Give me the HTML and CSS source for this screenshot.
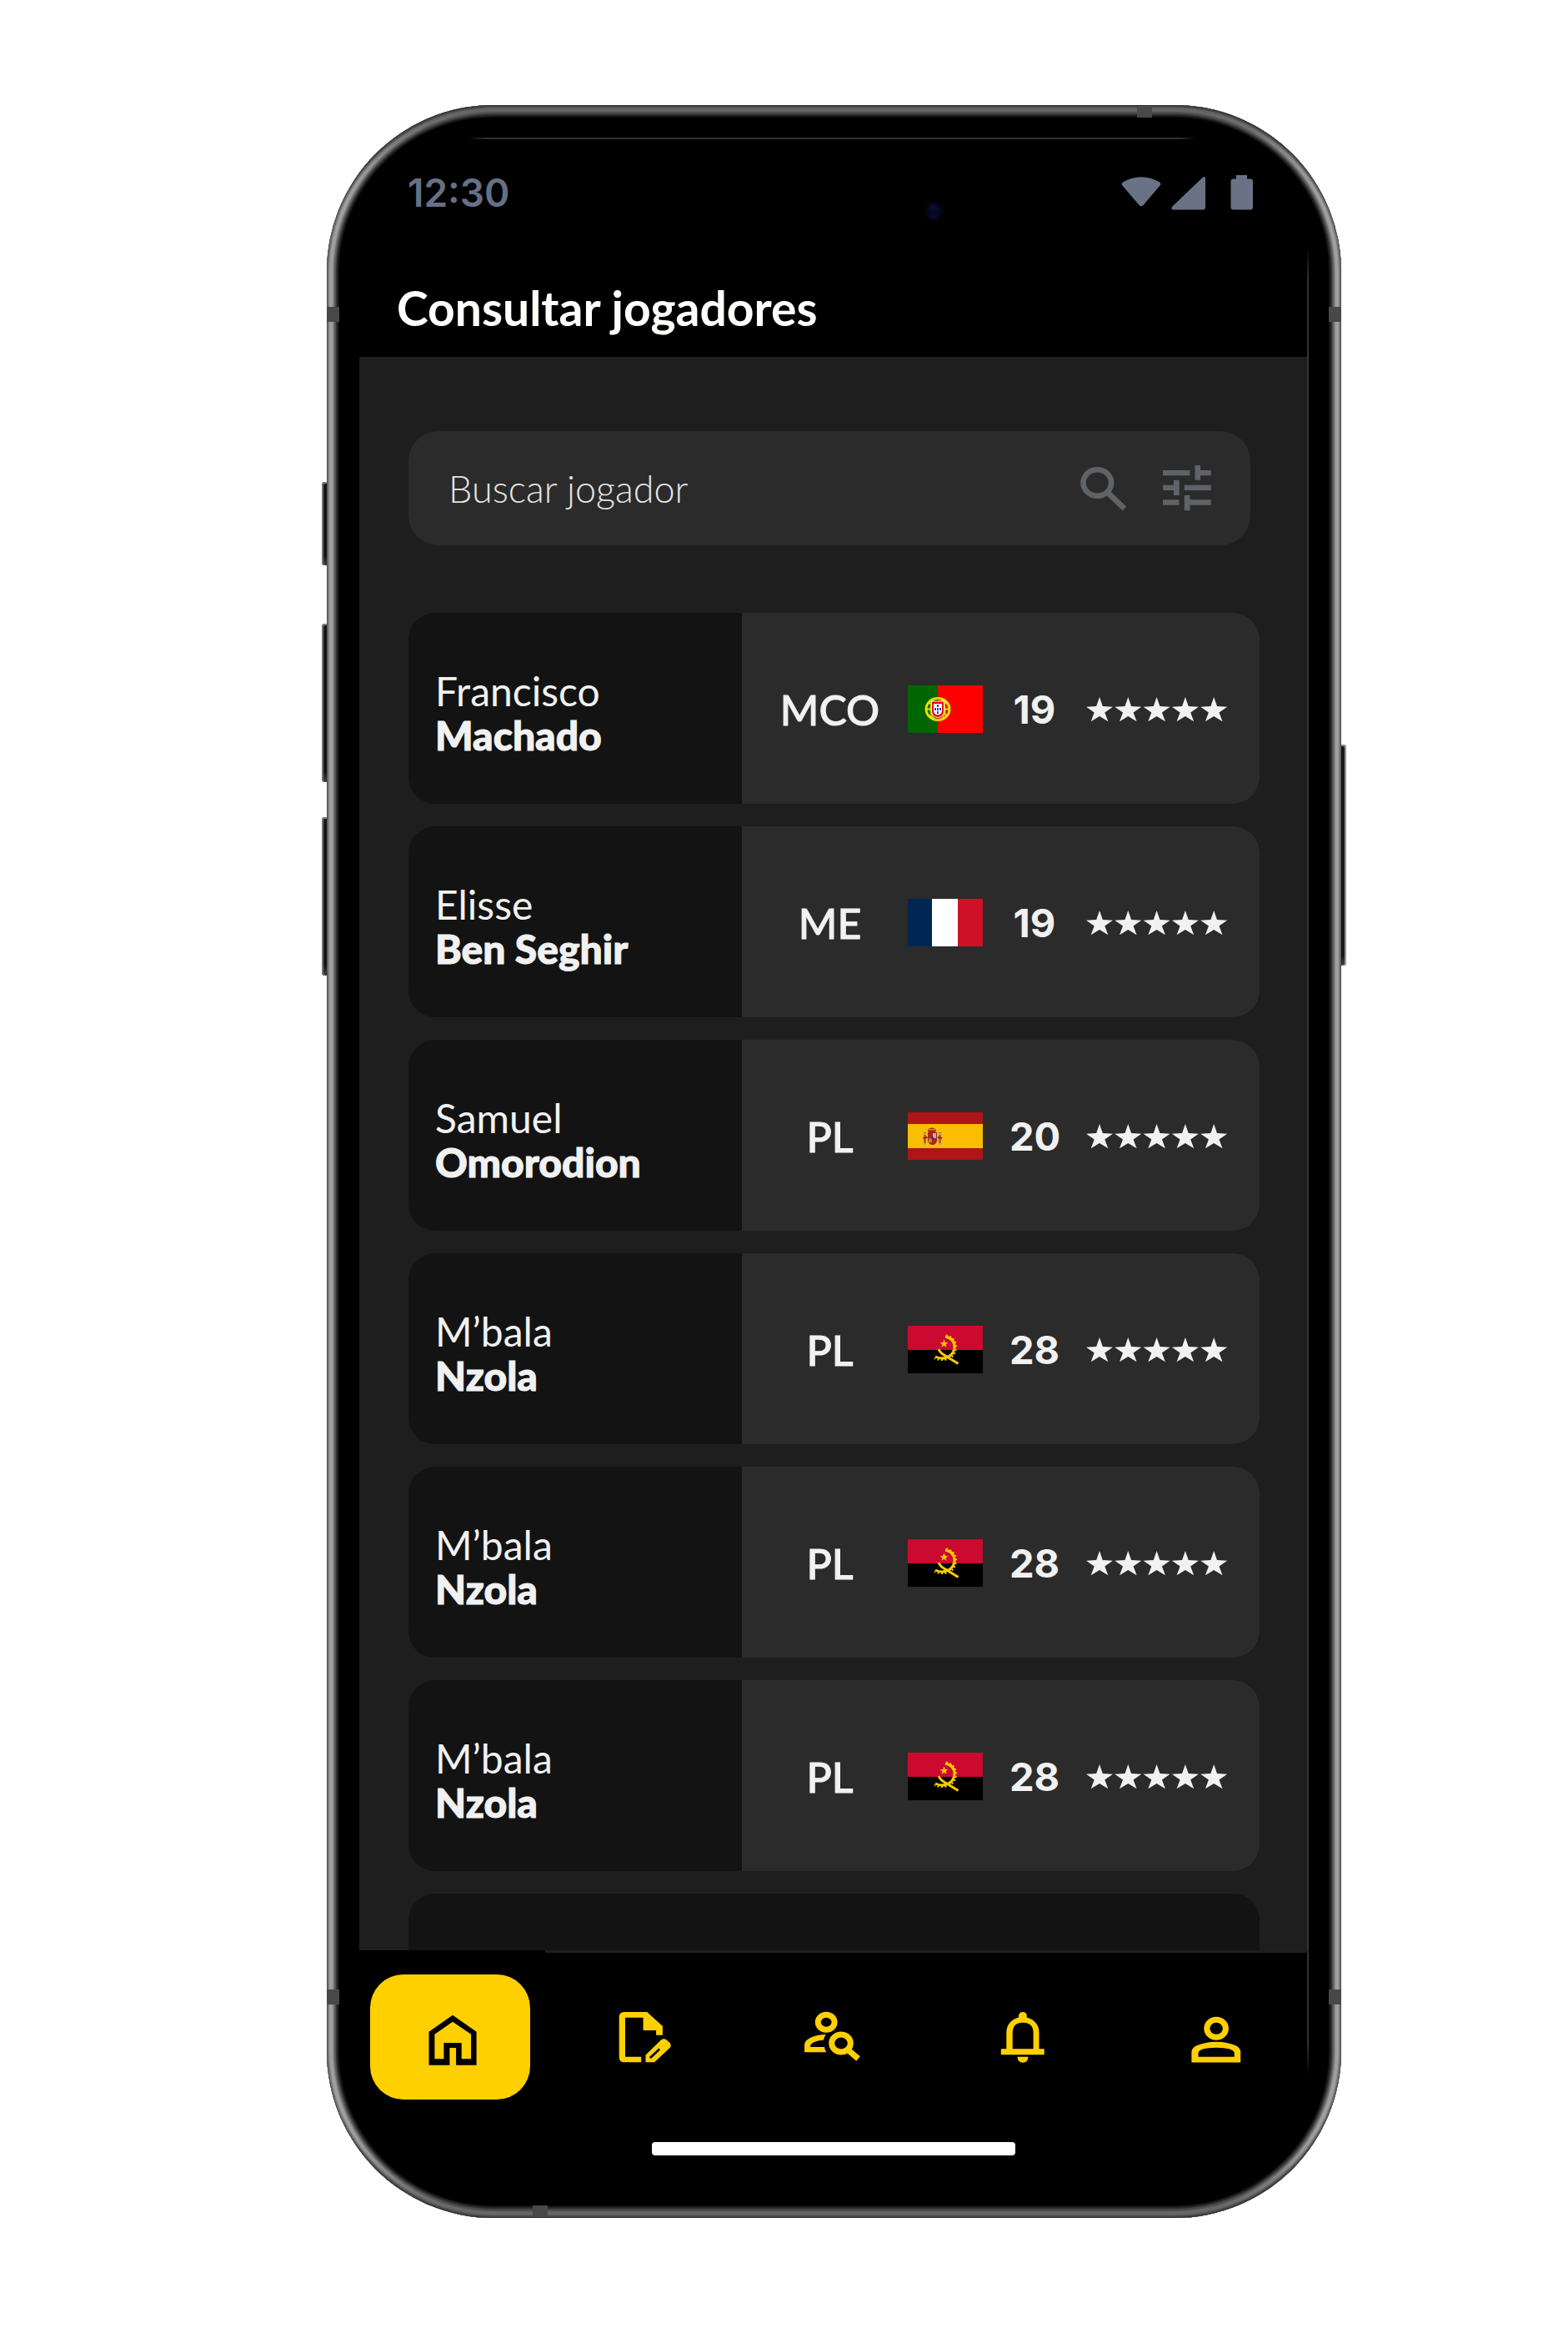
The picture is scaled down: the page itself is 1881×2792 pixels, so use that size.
FILE: index.html
```
<!DOCTYPE html>
<html lang="pt">
<head>
<meta charset="utf-8">
<meta name="viewport" content="width=device-width, initial-scale=1">
<title>Consultar jogadores</title>
<link rel="stylesheet" href="styles.css">
</head>
<body>
<svg class="sprite" aria-hidden="true">
  <symbol id="stars" viewBox="0 0 170 30">
    <g id="star-row">
      <path id="star" d="M16 0 19.8 11 32 11.7 22.3 18.5 26.3 29.3 16 23 5.7 29.3 9.7 18.5 0 11.7 12.2 11Z"/>
      <use href="#star" x="34.3"/><use href="#star" x="68.6"/><use href="#star" x="102.9"/><use href="#star" x="137.2"/>
    </g>
  </symbol>
  <symbol id="flag-pt" viewBox="0 0 90 57">
    <path fill="#f00" d="M0 0h90v57H0z"/><path fill="#060" d="M0 0h36v57H0z"/>
    <ellipse cx="36" cy="28.5" rx="14" ry="13" fill="none" stroke="#e8e000" stroke-width="3"/>
    <ellipse cx="36" cy="28.5" rx="9" ry="13" fill="none" stroke="#d8d000" stroke-width="1.5"/>
    <path fill="none" stroke="#e8e000" stroke-width="2" d="M22 28.500H50M25 20Q36 29 47 36M24 35 32 40M40 17l8 6"/>
    <path fill="#e00" stroke="#fff" stroke-width="1" d="M28.500 19H43.500V30Q43.500 38 36 38.500 28.500 38 28.500 30Z"/>
    <path fill="#fff" d="M31 22H41V30Q41 35 36 35.500 31 35 31 30Z"/>
    <path fill="#2a4fa8" d="M35 23h2v3h-2zM35 27h2v3h-2zM35 31h2v3h-2zM32 27h2v3h-2zM38 27h2v3h-2z"/>
  </symbol>
  <symbol id="flag-fr" viewBox="0 0 90 57">
    <path fill="#fff" d="M0 0h90v57H0z"/><path fill="#002654" d="M0 0h29v57H0z"/><path fill="#ce1126" d="M60 0h30v57H60z"/>
  </symbol>
  <symbol id="flag-es" viewBox="0 0 90 57">
    <path fill="#ad1519" d="M0 0h90v57H0z"/><path fill="#fabd00" d="M0 14h90v29H0z"/>
    <path fill="#a8261c" d="M24 22Q24 19 29 18.500 34 19 34 22L33 24H35V34Q34 39 29.500 39 25 39 24 34V24H25Z"/>
    <path fill="#d9a0b0" d="M30 25h4v6h-4z"/><path fill="#c78a1e" d="M25 31h4v5h-4zM25 20h8v1.500h-8z"/>
    <circle cx="29.500" cy="31" r="1.800" fill="#27408b"/>
    <path fill="none" stroke="#9b5548" stroke-width="2.400" d="M20.500 24v15M38.500 24v15"/>
    <path stroke="#c9b6a0" stroke-width="1.500" d="M18.500 26h4M18.500 38h4M36.500 26h4M36.500 38h4"/>
    <path stroke="#ad1519" stroke-width="2" d="M18.500 31l5-1M36 30l5 1"/>
  </symbol>
  <symbol id="flag-ao" viewBox="0 0 90 57">
    <path fill="#cc092f" d="M0 0h90v29H0z"/><path fill="#000" d="M0 29h90v28H0z"/>
    <path fill="none" stroke="#ffcb00" stroke-width="3" d="M45 13Q56 15 56 26 55 36 45 38.500 39 40 33 37"/>
    <path fill="none" stroke="#ffcb00" stroke-width="2" stroke-dasharray="2 2.500" d="M46 11.500Q58 14 58 26 57 38 46 40.500 39 42 32 39"/>
    <path fill="none" stroke="#ffcb00" stroke-width="3" d="M37 28Q39 33 46 36.500L60.500 45.500"/>
    <path fill="#ffcb00" d="M43.500 16.500 44.800 20 48.500 20.200 45.600 22.300 46.600 25.700 43.500 23.700 40.400 25.700 41.400 22.300 38.500 20.200 42.200 20Z"/>
  </symbol>
</svg>

<main class="phone">
  <span class="key key-action"></span>
  <span class="key key-up"></span>
  <span class="key key-down"></span>
  <span class="key key-power"></span>
  <div class="frame">
    <span class="seam seam-left-top"></span>
    <span class="seam seam-right-top"></span>
    <span class="seam seam-left-bottom"></span>
    <span class="seam seam-right-bottom"></span>
    <span class="seam seam-top"></span>
    <span class="seam seam-bottom"></span>
    <span class="glare-top"></span>
    <span class="glare-side"></span>
    <span class="camera"></span>

    <header class="header">
      <div class="status">
        <time class="clock">12:30</time>
        <svg class="status-icons" viewBox="0 0 158 42" aria-hidden="true">
          <path d="M1 12Q0 10 2 8.500Q24 -4 46 8.500Q48 10 47 12L26.500 36Q24 38.500 21.500 36Z"/>
          <path d="M98 2.500Q101 1 101 4V38Q101 41.500 98 41.500H63Q59 41.500 61 38Z"/>
          <path d="M138 0H151V4.500H155Q158 4.500 158 7.500V38Q158 41.500 155 41.500H134.500Q131.500 41.500 131.500 38V7.500Q131.500 4.500 134.500 4.500H138Z"/>
        </svg>
      </div>
      <h1 class="title">Consultar jogadores</h1>
    </header>

    <section class="content">
      <form class="search" role="search">
        <input class="search-input" type="text" placeholder="Buscar jogador" aria-label="Buscar jogador">
        <button class="icon-button" type="submit" aria-label="Buscar">
          <svg class="search-icon" viewBox="0 0 60 60"><ellipse cx="23.300" cy="23" rx="16.800" ry="15.800"/><path d="M35 34 56 54"/></svg>
        </button>
        <button class="icon-button" type="button" aria-label="Filtros">
          <svg class="filter-icon" viewBox="0 0 60 60"><path d="M0 8H32.400V14.300H0ZM38.500 2H45V8H57.700V14.300H45V19.700H38.500ZM0 25.700H13V19.700H19.700V38H13V32H0ZM25.800 25.700H57.700V32H25.800ZM0 43.300H19.400V49.700H0ZM25.800 38H32.400V43.300H57.700V49.700H32.400V56.300H25.800Z"/></svg>
        </button>
      </form>

      <ul class="players">
        <li class="player">
          <div class="name">Francisco<strong class="surname">Machado</strong></div>
          <div class="stats"><span class="position">MCO</span><svg class="flag" role="img" aria-label="Portugal"><use href="#flag-pt"/></svg><span class="age">19</span><svg class="stars" role="img" aria-label="5 estrelas"><use href="#stars"/></svg></div>
        </li>
        <li class="player">
          <div class="name">Elisse<strong class="surname">Ben Seghir</strong></div>
          <div class="stats"><span class="position">ME</span><svg class="flag" role="img" aria-label="França"><use href="#flag-fr"/></svg><span class="age">19</span><svg class="stars" role="img" aria-label="5 estrelas"><use href="#stars"/></svg></div>
        </li>
        <li class="player">
          <div class="name">Samuel<strong class="surname">Omorodion</strong></div>
          <div class="stats"><span class="position">PL</span><svg class="flag" role="img" aria-label="Espanha"><use href="#flag-es"/></svg><span class="age">20</span><svg class="stars" role="img" aria-label="5 estrelas"><use href="#stars"/></svg></div>
        </li>
        <li class="player">
          <div class="name">M’bala<strong class="surname">Nzola</strong></div>
          <div class="stats"><span class="position">PL</span><svg class="flag" role="img" aria-label="Angola"><use href="#flag-ao"/></svg><span class="age">28</span><svg class="stars" role="img" aria-label="5 estrelas"><use href="#stars"/></svg></div>
        </li>
        <li class="player">
          <div class="name">M’bala<strong class="surname">Nzola</strong></div>
          <div class="stats"><span class="position">PL</span><svg class="flag" role="img" aria-label="Angola"><use href="#flag-ao"/></svg><span class="age">28</span><svg class="stars" role="img" aria-label="5 estrelas"><use href="#stars"/></svg></div>
        </li>
        <li class="player">
          <div class="name">M’bala<strong class="surname">Nzola</strong></div>
          <div class="stats"><span class="position">PL</span><svg class="flag" role="img" aria-label="Angola"><use href="#flag-ao"/></svg><span class="age">28</span><svg class="stars" role="img" aria-label="5 estrelas"><use href="#stars"/></svg></div>
        </li>
        <li class="player player-peek"></li>
      </ul>
    </section>

    <nav class="tabs">
      <a class="tab tab-active" href="#inicio" aria-label="Início">
        <svg class="tab-icon" viewBox="0 0 72 72"><path fill-rule="evenodd" d="M10.500 69.700V29.700L39 9.700 67.600 29.700V69.700H43.100V49H35.400V69.700ZM17.400 62.300H28.400V43H49.700V62.300H61.100V32.700L39 17.700 17.400 32.700Z"/></svg>
      </a>
      <a class="tab" href="#relatorios" aria-label="Relatórios">
        <svg class="tab-icon" viewBox="0 0 72 72"><path d="M13 6H40.100L58.900 23V33.700H51.100V28H35.600V12.700H14V59.700H33.200V66.300H13Q6.700 66.300 6.700 60V12Q6.700 6 13 6Z"/><path fill-rule="evenodd" d="M38.500 66.300V57.500L57 39.500Q60.500 37 63.500 39.500L67.500 43Q70 46.300 67.500 49L49 66.300ZM43.400 61.500H45.500L56 51.500 54.400 49.500 43.400 59.500Z"/></svg>
      </a>
      <a class="tab" href="#jogadores" aria-label="Jogadores">
        <svg class="tab-icon" viewBox="0 0 72 72"><ellipse class="line" cx="27.200" cy="18.300" rx="9.900" ry="9"/><path fill-rule="evenodd" d="M1.100 54.300V45Q1.500 40 8 37 16 33 26.600 33Q24.500 36 24 39.500 16 40 11 43 8 44.500 8 48H25Q25.300 51.500 27.200 54.300Z"/><ellipse class="line" cx="45" cy="43.500" rx="11.300" ry="10.500"/><path class="line" d="M52 50.500 65.500 62"/></svg>
      </a>
      <a class="tab" href="#alertas" aria-label="Notificações">
        <svg class="tab-icon" viewBox="0 0 72 72"><path fill-rule="evenodd" d="M8.800 50.300H15.300V31Q15.300 17 30 12.500V10.500Q30.500 6 35 6 39.500 6 39.800 10.500V12.500Q54.500 17 54.500 31V50.300H60.700V57.300H8.800ZM22.700 50.300H47.600V31Q47.600 18.700 35 18.700 22.700 18.700 22.700 31Z"/><path d="M28.400 59.700H41.500Q41 66.700 35 66.700 29 66.700 28.400 59.700Z"/></svg>
      </a>
      <a class="tab" href="#perfil" aria-label="Perfil">
        <svg class="tab-icon" viewBox="0 0 72 72"><ellipse class="line" cx="40.100" cy="25.800" rx="11.300" ry="10.500"/><path fill-rule="evenodd" d="M10.400 66.500V54Q10.400 49.500 16 46.500 27 41.700 40 41.700 53 41.700 64 46.500 69.200 49.500 69.200 54V66.500ZM18.500 59.700H61.800V55Q60 48.700 40 48.700 20 48.700 18.500 55Z"/></svg>
      </a>
    </nav>
    <div class="home-bar"></div>
  </div>
</main>
</body>
</html>
```
FILE: styles.css
```
* {
  box-sizing: border-box;
}

body {
  margin: 0;
  padding: 126px 32px 131px 152px;
  background: #fff;
  color: #f1f1f1;
  font-family: Lato, "Liberation Sans", sans-serif;
}

.sprite {
  position: absolute;
  width: 0;
  height: 0;
}

/* Device body */
.phone {
  position: relative;
  max-width: 1217px;
  margin: 0 auto;
}

.frame {
  position: relative;
  padding: 0 40px 75px 39px;
  border-radius: 200px;
  background: #000;
  box-shadow:
    inset 0 22px 6px -12px rgba(0, 0, 0, 0.4),
    inset 0 -22px 6px -12px rgba(0, 0, 0, 0.4),
    inset 0 0 1px 1px #4c4c4c,
    inset 0 0 1px 3px #7a7a7a,
    inset 0 0 2px 8px #a0a0a0,
    inset 0 0 2px 11px #606060,
    inset 0 0 2px 14px #262626;
}

.key {
  position: absolute;
  left: -6px;
  width: 12px;
  border-radius: 4px;
  background: #161616;
  box-shadow: inset 2px 0 1px #777, inset 0 2px 1px #888, inset 0 -8px 4px #333;
}

.key-action {
  top: 452px;
  height: 100px;
}

.key-up {
  top: 622px;
  height: 190px;
}

.key-down {
  top: 854px;
  height: 190px;
}

.key-power {
  top: 767px;
  right: -6px;
  left: auto;
  height: 265px;
  box-shadow: inset -2px 0 1px #999, inset 0 2px 1px #888, inset 0 -8px 4px #333;
}

.seam {
  position: absolute;
  width: 15px;
  height: 18px;
  background: #484848;
}

.seam-left-top {
  top: 242px;
  left: 0;
}

.seam-right-top {
  top: 242px;
  right: 0;
}

.seam-left-bottom {
  bottom: 256px;
  left: 0;
}

.seam-right-bottom {
  right: 0;
  bottom: 256px;
}

.seam-top {
  top: 1px;
  right: 227px;
  width: 18px;
  height: 14px;
}

.seam-bottom {
  bottom: 1px;
  left: 247px;
  width: 18px;
  height: 14px;
}

.glare-top {
  position: absolute;
  top: 39px;
  right: 174px;
  left: 170px;
  height: 2px;
  background: linear-gradient(90deg, transparent, #303030 20px, #303030 calc(100% - 20px), transparent);
}

.glare-side {
  position: absolute;
  top: 170px;
  right: 39px;
  bottom: 170px;
  width: 2px;
  background: linear-gradient(transparent, #333 40px, #333 calc(100% - 40px), transparent);
}

.camera {
  position: absolute;
  top: 119px;
  right: 480px;
  width: 18px;
  height: 18px;
  border-radius: 50%;
  background: linear-gradient(#10124a, #05061c 50%, #0b1038);
  filter: blur(2px);
}

/* Header */
.header {
  padding: 78px 0 27px;
}

.status {
  display: flex;
  align-items: center;
  justify-content: space-between;
  padding: 0 66px 0 58px;
}

.clock {
  color: #667085;
  font: 600 46px/54px Inter, "Liberation Sans", sans-serif;
}

.status-icons {
  width: 158px;
  height: 42px;
  fill: #6a7285;
}

.title {
  margin: 79px 0 0;
  padding: 0 45px;
  color: #fffffb;
  font-size: 57px;
  font-weight: 700;
  line-height: 64px;
}

/* Player list */
.content {
  padding: 89px 58px 0 59px;
  background: #1e1e1e;
}

.search {
  display: flex;
  align-items: center;
  gap: 42px;
  height: 137px;
  margin-right: 11px;
  padding: 0 45px 0 48px;
  border-radius: 36px;
  background: #2b2b2b;
}

.search-input {
  flex: 1;
  min-width: 0;
  padding: 0;
  border: 0;
  outline: 0;
  background: none;
  color: #e4e4e4;
  font: 300 45px/54px Lato, "Liberation Sans", sans-serif;
}

.search-input::placeholder {
  color: #e4e4e4;
  opacity: 1;
}

.icon-button {
  display: block;
  width: 60px;
  height: 60px;
  padding: 0;
  border: 0;
  background: none;
}

.search-icon,
.filter-icon {
  display: block;
  width: 60px;
  height: 60px;
  fill: #5f6368;
}

.search-icon {
  fill: none;
  stroke: #5f6368;
  stroke-width: 6.6;
}

.players {
  display: flex;
  flex-direction: column;
  gap: 27px;
  margin: 0;
  padding: 81px 0 0;
  list-style: none;
}

.player {
  display: grid;
  grid-template-columns: 400px 1fr;
  height: 229px;
  overflow: hidden;
  border-radius: 32px;
  background: #131313;
}

.player-peek {
  height: 68px;
  border-radius: 32px 32px 0 0;
}

.name {
  display: flex;
  flex-direction: column;
  justify-content: center;
  padding: 10px 0 0 32px;
  font-size: 48px;
  line-height: 53px;
}

.surname {
  font-weight: 900;
  -webkit-text-stroke: 1px currentColor;
}

.stats {
  display: grid;
  grid-template-columns: 1fr 90px 60px 170px;
  align-items: center;
  gap: 32px;
  padding: 2px 38px 0 44px;
  background: #2b2b2b;
}

.position {
  font-size: 50px;
  font-weight: 500;
  line-height: 58px;
  text-align: center;
  -webkit-text-stroke: 1px currentColor;
}

.flag {
  width: 90px;
  height: 57px;
}

.age {
  font: 700 47px/54px Inter, "Liberation Sans", sans-serif;
  text-align: center;
}

.stars {
  width: 170px;
  height: 30px;
  fill: #f1f1f1;
}

/* Bottom navigation */
.tabs {
  position: relative;
  display: grid;
  grid-template-columns: repeat(5, 1fr);
  align-items: center;
  padding-top: 29px;
}

.tabs::before {
  position: absolute;
  top: 0;
  right: 0;
  left: 223px;
  height: 3px;
  background: #1d1f24;
  content: "";
}

.tab {
  display: flex;
  align-items: center;
  justify-content: center;
  height: 150px;
  color: #ffd000;
}

.tab-active {
  width: 192px;
  margin-left: 13px;
  border-radius: 40px;
  background: #ffd000;
  color: #000;
}

.tab-icon {
  width: 72px;
  height: 72px;
  fill: currentColor;
}

.tab-icon .line {
  fill: none;
  stroke: currentColor;
  stroke-width: 7;
}

.home-bar {
  width: 436px;
  height: 16px;
  margin: 51px auto 0;
  border-radius: 4px;
  background: #fff;
}
```
